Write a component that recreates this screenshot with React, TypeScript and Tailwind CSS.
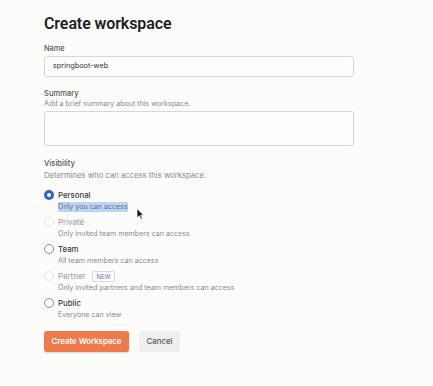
import React, { useState } from 'react';

type Option = {
  id: string;
  label: string;
  desc: string;
  disabled?: boolean;
  badge?: string;
};

const options: Option[] = [
  { id: 'personal', label: 'Personal', desc: 'Only you can access' },
  { id: 'private', label: 'Private', desc: 'Only invited team members can access', disabled: true },
  { id: 'team', label: 'Team', desc: 'All team members can access' },
  { id: 'partner', label: 'Partner', desc: 'Only invited partners and team members can access', disabled: true, badge: 'NEW' },
  { id: 'public', label: 'Public', desc: 'Everyone can view' },
];

export default function App() {
  const [visibility, setVisibility] = useState('personal');

  return (
    <div className="relative min-h-[386px] w-full bg-[#fcfcfb] pl-[44px] pt-[12px] font-['Inter',sans-serif] text-[#2b2b2b]">
      <h1 className="font-['Roboto',sans-serif] text-[16px] font-semibold leading-[24px] tracking-[-0.1px] text-[#1f1f1f]">
        Create workspace
      </h1>

      <label className="mt-[7px] block text-[7.4px] font-medium leading-[12px] text-[#555]">Name</label>
      <div className="mt-[1px] flex h-[21px] w-[310px] items-center rounded-[3px] border border-[#d6d6d6] bg-[#fdfdfd] px-[8px] text-[7.3px] text-[#333]">
        springboot-web
      </div>

      <label className="mt-[11px] block text-[7.6px] font-medium leading-[11px] text-[#555]">Summary</label>
      <p className="text-[7.1px] leading-[10px] text-[#8a8a8a]">Add a brief summary about this workspace.</p>
      <div className="mt-[2px] h-[35px] w-[310px] rounded-[3px] border border-[#d6d6d6] bg-[#fdfdfd]" />

      <label className="mt-[12px] block text-[7.6px] font-medium leading-[11px] text-[#555]">Visibility</label>
      <p className="mt-[2px] text-[7.7px] leading-[10px] text-[#8a8a8a]">Determines who can access this workspace.</p>

      <div className="mt-[8px] flex flex-col gap-[3px]">
        {options.map((o) => {
          const checked = visibility === o.id;
          return (
            <div key={o.id} className="flex flex-col">
              <button
                type="button"
                disabled={o.disabled}
                onClick={() => setVisibility(o.id)}
                className="flex h-[12px] items-center gap-[4px] text-left"
              >
                {checked ? (
                  <span className="h-[10px] w-[10px] rounded-full border-[3px] border-[#2a62d9] bg-white" />
                ) : (
                  <span
                    className={
                      o.disabled
                        ? 'h-[10px] w-[10px] rounded-full border border-[#e4e4e4] bg-white'
                        : 'h-[10px] w-[10px] rounded-full border border-[#8d8d8d] bg-white'
                    }
                  />
                )}
                <span
                  className={
                    o.disabled
                      ? 'text-[7.8px] font-medium leading-[12px] text-[#a5a5a5]'
                      : 'text-[7.8px] font-medium leading-[12px] text-[#3a3a3a]'
                  }
                >
                  {o.label}
                </span>
                {o.badge && (
                  <span className="ml-[3px] rounded-[2px] border border-[#ddd3f0] px-[3px] text-[6px] leading-[9px] text-[#7c62c4]">
                    {o.badge}
                  </span>
                )}
              </button>
              <div className="flex h-[12px] items-center pl-[14px]">
                <span
                  className={
                    o.id === 'personal'
                      ? 'bg-[#b9d5f7] text-[7.1px] leading-[10px] text-[#6b7280]'
                      : 'text-[7.1px] leading-[10px] text-[#8a8a8a]'
                  }
                >
                  {o.desc}
                </span>
              </div>
            </div>
          );
        })}
      </div>

      <div className="mt-[10px] flex gap-[10px]">
        <button className="h-[21px] w-[85px] rounded-[3px] bg-[#ef7a4b] text-[7.8px] font-semibold text-white shadow-[0_1px_2px_rgba(0,0,0,0.15)]">
          Create Workspace
        </button>
        <button className="h-[21px] w-[41px] rounded-[3px] bg-[#efefef] text-[7.8px] font-medium text-[#555]">
          Cancel
        </button>
      </div>

      <svg className="absolute left-[136px] top-[208px]" width="8" height="12" viewBox="0 0 8 12">
        <path d="M1 0.5 L1 10 L3.3 7.8 L5 11.3 L6.4 10.6 L4.8 7.3 L7.6 7.3 Z" fill="#111" stroke="#fff" strokeWidth="0.8" />
      </svg>
    </div>
  );
}
